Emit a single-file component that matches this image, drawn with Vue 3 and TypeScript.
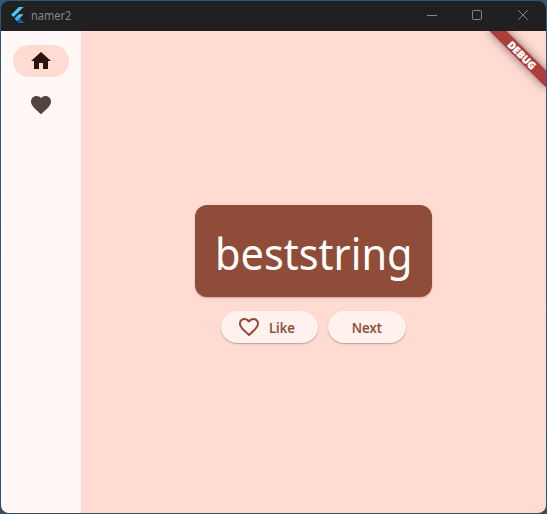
<script setup lang="ts">
import { ref } from 'vue'

const title = 'namer2'
const word = ref('beststring')
const liked = ref(false)
const page = ref<'home' | 'favorites'>('home')

const homePath = 'M10 20v-6h4v6h5v-8h3L12 3 2 12h3v8z'
const heartPath =
  'M12 21.35l-1.45-1.32C5.4 15.36 2 12.28 2 8.5 2 5.42 4.42 3 7.5 3c1.74 0 3.41.81 4.5 2.09C13.09 3.81 14.76 3 16.5 3 19.58 3 22 5.42 22 8.5c0 3.78-3.4 6.86-8.55 11.54L12 21.35z'
const heartOutlinePath =
  'M16.5 3c-1.74 0-3.41.81-4.5 2.09C10.91 3.81 9.24 3 7.5 3 4.42 3 2 5.42 2 8.5c0 3.78 3.4 6.86 8.55 11.54L12 21.35l1.45-1.32C18.6 15.36 22 12.28 22 8.5 22 5.42 19.58 3 16.5 3zm-4.4 15.55l-.1.1-.1-.1C7.14 14.24 4 11.39 4 8.5 4 6.5 5.5 5 7.5 5c1.54 0 3.04.99 3.57 2.36h1.87C13.46 5.99 14.96 5 16.5 5c2 0 3.5 1.5 3.5 3.5 0 2.89-3.14 5.74-7.9 10.05z'
</script>

<template>
  <div class="desktop">
    <div class="window">
      <header class="titlebar">
        <svg class="logo" viewBox="0 0 13 16">
          <path d="M7.9 0H12.6L2.5 10.1L0.1 7.8z" fill="#54c5f8" />
          <path d="M7.9 7.3H12.6L8.4 11.5L12.6 15.8H7.9L3.7 11.5z" fill="#54c5f8" />
          <path d="M6.1 13.9L8.4 11.5L12.6 15.8H7.9z" fill="#01579b" />
          <path d="M3.7 11.5L6.1 9.2L8.4 11.5L6.1 13.9z" fill="#29b6f6" />
        </svg>
        <span class="title">{{ title }}</span>
        <div class="controls">
          <svg viewBox="0 0 46 30"><path d="M18 14.5h10" /></svg>
          <svg viewBox="0 0 46 30"><rect x="17.5" y="9.5" width="9" height="9" rx="0.8" /></svg>
          <svg viewBox="0 0 46 30"><path d="M17.2 9.2l9.6 9.6M26.8 9.2l-9.6 9.6" /></svg>
        </div>
      </header>
      <div class="body">
        <nav class="rail">
          <button class="dest" :class="{ active: page === 'home' }" @click="page = 'home'">
            <svg viewBox="0 0 24 24"><path :d="homePath" /></svg>
          </button>
          <button class="dest" :class="{ active: page === 'favorites' }" @click="page = 'favorites'">
            <svg viewBox="0 0 24 24"><path :d="heartPath" /></svg>
          </button>
        </nav>
        <main class="content">
          <div class="card"><span>{{ word }}</span></div>
          <div class="actions">
            <button class="btn like" @click="liked = !liked">
              <svg viewBox="0 0 24 24"><path :d="liked ? heartPath : heartOutlinePath" /></svg>
              <span>Like</span>
            </button>
            <button class="btn next"><span>Next</span></button>
          </div>
        </main>
        <div class="banner"><span>DEBUG</span></div>
      </div>
    </div>
  </div>
</template>

<style>
body {
  margin: 0;
}
</style>

<style scoped>
.desktop {
  box-sizing: border-box;
  width: 547px;
  height: 514px;
  padding: 1px;
  background: linear-gradient(#2b587b, #2f5a7a 60%, #28506f 97%, #334d63);
  font-family: 'Noto Sans', 'Open Sans', sans-serif;
}
.window {
  display: flex;
  flex-direction: column;
  width: 545px;
  height: 512px;
  border-radius: 8px;
  overflow: hidden;
}
.titlebar {
  box-sizing: border-box;
  display: flex;
  align-items: center;
  flex: none;
  width: 546px;
  height: 30px;
  padding-left: 9.5px;
  background: #202020;
}
.logo {
  width: 13px;
  height: 16px;
  margin-top: -2px;
}
.title {
  margin-left: 7.5px;
  font-size: 12px;
  line-height: 16px;
  color: #868686;
  transform: scaleX(0.92);
  transform-origin: left;
}
.controls {
  display: flex;
  margin-left: auto;
}
.controls svg {
  width: 46px;
  height: 30px;
  fill: none;
  stroke: #858585;
  stroke-width: 1;
}
.body {
  position: relative;
  display: flex;
  flex: 1;
  overflow: hidden;
}
.rail {
  box-sizing: border-box;
  display: flex;
  flex-direction: column;
  align-items: center;
  gap: 12px;
  width: 80px;
  padding-top: 14px;
  background: #fff8f6;
}
button {
  border: 0;
  padding: 0;
  font: inherit;
}
.dest {
  display: flex;
  align-items: center;
  justify-content: center;
  width: 56px;
  height: 32px;
  border-radius: 16px;
  background: transparent;
}
.dest svg {
  width: 24px;
  height: 24px;
  fill: #53433f;
}
.dest.active {
  background: #ffdbd1;
}
.dest.active svg {
  fill: #2c150f;
}
.content {
  display: flex;
  flex: 1;
  flex-direction: column;
  align-items: center;
  padding-top: 174px;
  background: #ffdbd1;
}
.card {
  box-sizing: border-box;
  display: flex;
  align-items: center;
  justify-content: center;
  width: 237px;
  height: 92px;
  padding-top: 4px;
  border-radius: 12px;
  background: #8f4c38;
  box-shadow: 0 1px 2px rgba(60, 20, 10, 0.25);
  color: #fff;
  font-size: 44px;
  line-height: 52px;
}
.card span {
  transform: scaleX(0.942);
}
.actions {
  display: flex;
  gap: 10px;
  margin-top: 14px;
}
.btn {
  display: flex;
  align-items: center;
  height: 32px;
  border-radius: 16px;
  background: #fff1ed;
  box-shadow: 0 1px 1.5px rgba(60, 20, 10, 0.32);
  color: #8f4c38;
  font-size: 14px;
  font-weight: 500;
  line-height: 20px;
}
.btn span {
  padding-top: 2px;
  transform: scaleX(0.95);
  -webkit-text-stroke: 0.2px #8f4c38;
}
.like span {
  transform-origin: left;
}
.like {
  box-sizing: border-box;
  width: 97px;
  padding-left: 16px;
  gap: 7.5px;
}
.like svg {
  width: 24px;
  height: 24px;
  fill: #8f4c38;
}
.next {
  justify-content: center;
  width: 78px;
}
.banner {
  position: absolute;
  top: 18px;
  right: -16px;
  width: 80px;
  height: 12px;
  transform: rotate(45deg);
  background: #ac3f3d;
  box-shadow: 0 0 10px rgba(0, 0, 0, 0.5);
  color: #fff;
  font-size: 10.2px;
  font-weight: 900;
  line-height: 12px;
  text-align: center;
  -webkit-text-stroke: 0.3px #fff;
}
</style>
